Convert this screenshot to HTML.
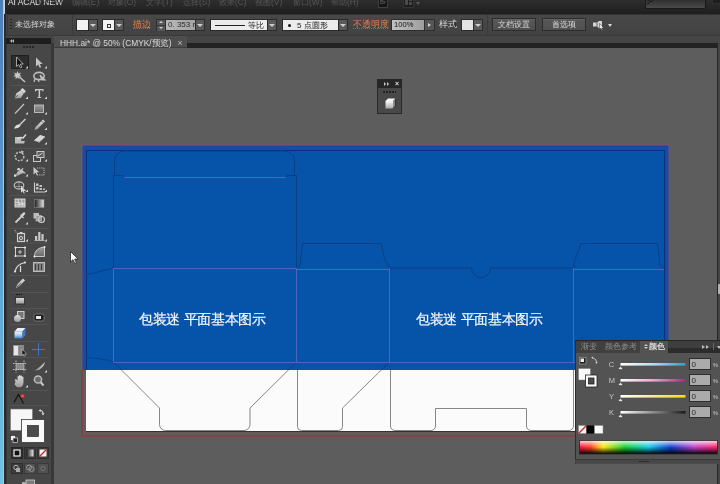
<!DOCTYPE html>
<html><head><meta charset="utf-8">
<style>
*{margin:0;padding:0;box-sizing:border-box}
html,body{width:720px;height:484px;overflow:hidden;background:#444;font-family:"Liberation Sans",sans-serif}
.a{position:absolute}
#menubar{left:0;top:0;width:720px;height:14px;background:linear-gradient(#2e2e2e,#1e1e1e)}
#ctrl{left:6.5px;top:14px;width:714px;height:21px;background:linear-gradient(#484848,#424242);border-top:1px solid #333;border-left:1px solid #3a3a3a}
#strip{left:0;top:35px;width:720px;height:13px;background:#454545;border-top:1px solid #3a3a3a}
#tabbar{left:51px;top:43px;width:669px;height:5.4px;background:#232323}
#tab{left:54px;top:36px;width:133px;height:12.4px;background:#4e4e4e;border-bottom:1px solid #3c3c3c;color:#d8d8d8;font-size:8.8px;line-height:12px;white-space:nowrap}
#canvas{left:53.6px;top:48.4px;width:663.6px;height:436px;background:#5d5d5d;overflow:hidden}
#tools{left:6px;top:38px;width:45px;height:446px;background:#474747;border-left:1px solid #383838}
#toolhead{left:6px;top:38px;width:45px;height:5.5px;background:#1e1e1e}
#leftblue{left:0;top:0;width:2.5px;height:484px;background:linear-gradient(#4f7fb8,#5a9cd0 45%,#70c4e0)}
#leftlight{left:2.5px;top:0;width:1.5px;height:484px;background:linear-gradient(90deg,#a8c0d8,#d0d8e0)}
#leftdark{left:4px;top:14px;width:2px;height:470px;background:#2a2a2a}
.t{position:absolute;white-space:nowrap;line-height:1;will-change:transform}
div{will-change:transform}
.box{position:absolute;background:#e8e8e8;border:1px solid #2a2a2a}
.dd{position:absolute;background:#5a5a5a;border:1px solid #2a2a2a}
.dd:after{content:"";position:absolute;left:50%;top:50%;margin-left:-3px;margin-top:-1px;border-left:3px solid transparent;border-right:3px solid transparent;border-top:3px solid #cfcfcf}
.btn{position:absolute;background:linear-gradient(#585858,#505050);border:1px solid #2c2c2c;box-shadow:inset 0 1px 0 #626262;color:#dcdcdc;font-size:7.7px;text-align:center;line-height:11.5px}
</style></head><body>
<div id="menubar" class="a"></div>
<div class="a" style="left:0;top:0;width:720px;height:14px;overflow:hidden">
<div class="t" style="left:8px;top:-1.8px;font-size:8.4px;color:#e8e8e8">AI ACAD NEW</div>
<div class="t" style="left:36px;top:-1.8px;font-size:8.4px;color:#3c3c3c">文件(F)</div>
<div class="t" style="left:72px;top:-1.8px;font-size:8.4px;color:#575757">编辑(E)</div>
<div class="t" style="left:108px;top:-1.8px;font-size:8.4px;color:#575757">对象(O)</div>
<div class="t" style="left:145.5px;top:-1.8px;font-size:8.4px;color:#575757">文字(T)</div>
<div class="t" style="left:182.5px;top:-1.8px;font-size:8.4px;color:#575757">选择(S)</div>
<div class="t" style="left:219px;top:-1.8px;font-size:8.4px;color:#575757">效果(C)</div>
<div class="t" style="left:255px;top:-1.8px;font-size:8.4px;color:#575757">视图(V)</div>
<div class="t" style="left:293px;top:-1.8px;font-size:8.4px;color:#575757">窗口(W)</div>
<div class="t" style="left:331px;top:-1.8px;font-size:8.4px;color:#575757">帮助(H)</div>
<div class="a" style="left:378px;top:-3px;width:10px;height:11px;border:1px solid #3e3e3e;background:#161616;color:#666;font-size:6px;line-height:9px;text-align:center">Br</div>
<div class="a" style="left:403px;top:-3px;width:11px;height:11px;border:1px solid #333;background:#1e1e1e"></div><div class="a" style="left:404.5px;top:-2px;width:3px;height:7px;background:#4a4a4a"></div><div class="a" style="left:409px;top:-2px;width:3px;height:3px;background:#4a4a4a"></div><div class="a" style="left:409px;top:2px;width:3px;height:3px;background:#4a4a4a"></div>
<div class="a" style="left:416px;top:2px;border-left:2.5px solid transparent;border-right:2.5px solid transparent;border-top:3px solid #5a5a5a"></div>
<div class="a" style="left:645px;top:-4px;width:60.5px;height:12.7px;background:linear-gradient(#262626,#4a4a4a);border:1px solid #1a1a1a;border-radius:2px"></div>
<div class="a" style="left:648px;top:-4px;width:6px;height:6px;border:1.2px solid #1a1a1a;border-radius:50%"></div>
<div class="a" style="left:647px;top:3px;width:3px;height:1.2px;background:#1a1a1a;transform:rotate(-45deg)"></div>
<div class="a" style="left:712px;top:-4px;width:10px;height:8px;border:1px solid #2e2e2e;background:#1e1e1e"></div>
</div>

<div id="ctrl" class="a"></div>
<div id="strip" class="a"></div>
<div class="a" style="left:10px;top:19px;width:2px;height:12px;background:repeating-linear-gradient(#262626 0 1px,transparent 1px 3px)"></div>
<div class="t" style="left:15px;top:20.5px;font-size:8px;color:#dadada">未选择对象</div>
<div class="a" style="left:72px;top:15px;width:1px;height:19px;background:#3a3a3a"></div>
<div class="box" style="left:76px;top:19px;width:13px;height:12px;background:#f2f2f2"></div>
<div class="dd" style="left:88px;top:19px;width:10px;height:12px"></div>
<div class="box" style="left:102px;top:19px;width:13px;height:12px;background:#f2f2f2"><div class="a" style="left:4px;top:3.5px;width:4px;height:3.5px;border:1px solid #333"></div></div>
<div class="dd" style="left:114px;top:19px;width:10px;height:12px"></div>
<div class="t" style="left:133px;top:20px;font-size:8.6px;color:#e8804c;text-decoration:underline dotted;text-decoration-color:#a86040">描边</div>
<div class="a" style="left:155.5px;top:19px;width:10px;height:12px;background:#3a3a3a;border:1px solid #2e2e2e">
 <div class="a" style="left:0;top:0;width:8px;height:5px;background:#575757"></div><div class="a" style="left:0;top:5.5px;width:8px;height:4.5px;background:#575757"></div>
 <div class="a" style="left:2px;top:1px;border-left:2px solid transparent;border-right:2px solid transparent;border-bottom:2.5px solid #d0d0d0"></div>
 <div class="a" style="left:2px;top:6.5px;border-left:2px solid transparent;border-right:2px solid transparent;border-top:2.5px solid #d0d0d0"></div>
</div>
<div class="a" style="left:165px;top:19px;width:31px;height:12px;background:#a9a9a9;border:1px solid #2e2e2e;font-size:8px;color:#2a2a2a;line-height:10.5px;padding-left:2px;white-space:nowrap;overflow:hidden;background:linear-gradient(90deg,#b8b8b8,#a4a4a4)">0. 353 r</div>
<div class="dd" style="left:195px;top:19px;width:10px;height:12px"></div>
<div class="box" style="left:210px;top:19px;width:58px;height:12px;background:#ececec"><div class="a" style="left:4px;top:5px;width:30px;height:1px;background:#222"></div><div class="t" style="left:37px;top:1.5px;font-size:8px;color:#222">等比</div></div>
<div class="dd" style="left:267px;top:19px;width:10px;height:12px"></div>
<div class="box" style="left:282px;top:19px;width:57px;height:12px;background:#ececec"><div class="a" style="left:5px;top:4px;width:3px;height:3px;border-radius:50%;background:#111"></div><div class="t" style="left:13.5px;top:1.5px;font-size:8px;color:#222">5 点圆形</div></div>
<div class="dd" style="left:338px;top:19px;width:10px;height:12px"></div>
<div class="t" style="left:353px;top:20px;font-size:8.6px;color:#e8804c;text-decoration:underline dotted;text-decoration-color:#a86040">不透明度</div>
<div class="a" style="left:391px;top:19px;width:34px;height:12px;background:linear-gradient(90deg,#c2c2c2,#9e9e9e);border:1px solid #2e2e2e;font-size:7.6px;color:#111;line-height:10px;padding-left:2px">100%</div>
<div class="a" style="left:424px;top:19px;width:11px;height:12px;background:#555;border:1px solid #2e2e2e"><div class="a" style="left:3px;top:2.5px;border-top:2.5px solid transparent;border-bottom:2.5px solid transparent;border-left:3.5px solid #d0d0d0"></div></div>
<div class="t" style="left:439px;top:20px;font-size:8.6px;color:#d8d8d8">样式</div>
<div class="a" style="left:455px;top:23px;width:1px;height:4px;background:#2e2e2e"></div>
<div class="box" style="left:461px;top:19px;width:13px;height:12px;background:#e4e4e4"></div>
<div class="dd" style="left:473px;top:19px;width:10px;height:12px"></div>
<div class="a" style="left:487px;top:15px;width:1px;height:19px;background:#3a3a3a"></div>
<div class="btn" style="left:492px;top:18px;width:44px;height:13px">文档设置</div>
<div class="btn" style="left:542px;top:18px;width:44px;height:13px">首选项</div>
<svg class="a" style="left:592px;top:19px" width="14" height="12" viewBox="0 0 14 12"><path d="M1 3.5h4l2-1.5h3v7H7l-2-1.5H1z" fill="#d4d4d4"/><path d="M5 3.5v4" stroke="#444" stroke-width=".8"/><path d="M7.5 4.5v6l1.4-1.3 1 2 .9-.4-1-1.9h1.9z" fill="#eee" stroke="#333" stroke-width=".5"/></svg>
<div class="a" style="left:607.5px;top:24px;border-left:2.5px solid transparent;border-right:2.5px solid transparent;border-top:3.5px solid #d8d8d8"></div>

<div id="tabbar" class="a"></div>
<div id="tools" class="a"></div>
<div id="toolhead" class="a"></div>
<div class="a" style="left:9.5px;top:39px;border-top:2px solid transparent;border-bottom:2px solid transparent;border-right:2.5px solid #bbb"></div><div class="a" style="left:12px;top:39px;border-top:2px solid transparent;border-bottom:2px solid transparent;border-right:2.5px solid #bbb"></div>
<svg class="a" style="left:0;top:0" width="60" height="484" viewBox="0 0 60 484">
<defs>
<linearGradient id="gg" x1="0" y1="0" x2="0" y2="1"><stop offset="0" stop-color="#e0e0e0"/><stop offset="1" stop-color="#9a9a9a"/></linearGradient>
<linearGradient id="gh" x1="0" y1="0" x2="1" y2="0"><stop offset="0" stop-color="#1a1a1a"/><stop offset="1" stop-color="#e8e8e8"/></linearGradient>
<linearGradient id="gr" x1="0" y1="0" x2="0" y2="1"><stop offset="0" stop-color="#9c9c9c"/><stop offset="1" stop-color="#6a6a6a"/></linearGradient>
<linearGradient id="gb" x1="0" y1="0" x2="0" y2="1"><stop offset="0" stop-color="#f0f8ff"/><stop offset=".5" stop-color="#b0d0f0"/><stop offset="1" stop-color="#3a80d0"/></linearGradient>
</defs>
<!-- gripper -->
<path d="M23 47h12" stroke="#262626" stroke-width="2" stroke-dasharray="2 1"/>

<!-- separators -->
<g stroke="#535353" stroke-width="1">
<path d="M10 85.5h38M10 148.5h38M10 195.5h38M10 228.5h38M10 243h38M10 275.5h38M10 292.5h38M10 308.5h38M10 324.5h38M10 341.5h38M10 357.5h38M10 390.5h38M10 405.5h38"/>
</g>
<!-- selection -->
<rect x="11.5" y="55.5" width="17" height="13" fill="#2c2c2c" stroke="#1f1f1f"/>
<path d="M16.5 57v9.5l2.2-2 1.6 3.4 1.5-.6-1.5-3.3h3z" fill="#111" stroke="#b0b0b0" stroke-width=".9"/>
<path d="M36 57.5v9l2.1-2 1.6 3.3 1.5-.6-1.5-3.2h3z" fill="#c4c4c4"/>
<!-- magic wand -->
<path d="M17.5 71l1 2.4 2.5-.8-1.3 2.3 2.2 1.4-2.6.3.1 2.6-1.9-1.8-1.9 1.8.1-2.6-2.6-.3 2.2-1.4-1.3-2.3 2.5.8z" fill="#c8c8c8"/>
<path d="M19.5 77l5.5 5" stroke="#c0c0c0" stroke-width="1.6"/>
<!-- lasso -->
<ellipse cx="39" cy="76" rx="5.2" ry="3.6" fill="none" stroke="#bdbdbd" stroke-width="1.6"/>
<path d="M35 78.5l-1 3.5M38 79l1 3M40 75l5 5h-3z" stroke="#bdbdbd" stroke-width="1.2" fill="#ccc"/>
<!-- pen -->
<path d="M14.5 98.5l1.8-5.2 4.3-2.7 3 3-2.7 4.3z" fill="url(#gg)"/>
<path d="M20.3 90l2.3-2 3.3 3.3-2 2.3z" fill="#d6d6d6"/>
<path d="M14.5 98.5l3.4-3.4" stroke="#555" stroke-width=".8"/>
<!-- type -->
<path d="M35 89h8.5v2.6h-.7l-.6-1.4h-2.1v6.7l1.2.4v.7h-3.9v-.7l1.2-.4v-6.7h-2.1l-.6 1.4H35z" fill="#cacaca"/>
<!-- line -->
<path d="M15 113.5l9-9.5" stroke="#c4c4c4" stroke-width="1.2"/>
<!-- rect -->
<rect x="34.5" y="105" width="9" height="7.5" fill="url(#gr)" stroke="#b8b8b8" stroke-width="1"/>
<!-- paintbrush -->
<path d="M25.5 119l-6 6" stroke="#cfcfcf" stroke-width="1.5"/>
<path d="M19.8 124.5c-2.5-.5-4.8 1.2-5.8 4 2.8.3 5.5-.8 6.6-3.2z" fill="#dedede"/>
<!-- pencil -->
<path d="M43 119.5l2 2-7.5 7.5-3 1 1-3z" fill="url(#gg)"/>
<path d="M41.5 121l2 2" stroke="#666" stroke-width=".8"/>
<!-- blob brush -->
<path d="M15 137h4c1 0 2 1 3 .5l-1 3.5h4l-1 2.5H15z" fill="#bdbdbd"/>
<path d="M17.5 139c1.5-2 4-2 5.5-1l3-3.5" stroke="#d8d8d8" stroke-width="1.4" fill="none"/>
<!-- eraser -->
<path d="M34 140.5l6.2-5.5 5 1.8-6 6z" fill="#a8a8a8"/>
<path d="M34 140.5l6.2-5.5 5 1.8-5.6 4.8z" fill="#d6d6d6"/>
<!-- rotate -->
<circle cx="19.5" cy="156.5" r="4.3" fill="none" stroke="#bcbcbc" stroke-width="1.5" stroke-dasharray="2 1.2"/>
<path d="M21 150.5l3 1.2-2.5 2z" fill="#ccc"/>
<!-- scale -->
<rect x="33.5" y="155.5" width="7" height="6" fill="none" stroke="#c8c8c8"/>
<rect x="37" y="151.5" width="7" height="6" fill="#5a5a5a" stroke="#c8c8c8"/>
<path d="M38 156l4.5-3" stroke="#ddd" stroke-width="1"/>
<!-- warp -->
<path d="M15 175.5l1.5-2c1-1.5 2-3 3.3-3.2-.8-.6-2-.5-2.6.3-.6-1.3.2-2.8 1.6-2.7 1.2.1 1.5 1.3 2 2.3.5-1.2 1.5-2.3 2.7-2.2-.3 1-.9 1.8-1 2.6 1.3.6 2.6 1.6 3.3 3.1-1.3-.3-2.4-.7-3.5-.3-1.8.6-3.2 1.8-5 2.4z" fill="url(#gg)"/>
<rect x="14" y="174.5" width="2.2" height="2.2" fill="#ddd"/>
<!-- free transform -->
<path d="M33.5 167v7.5l2-1.8 1.3 2.6 1.1-.5-1.2-2.5h2.6z" fill="#c8c8c8"/>
<path d="M37 168h7v7h-7" fill="none" stroke="#c8c8c8" stroke-width=".9" stroke-dasharray="1.2 1"/>
<!-- shape builder -->
<ellipse cx="19" cy="185.5" rx="4.8" ry="3.6" fill="none" stroke="#c4c4c4" stroke-width="1.1"/>
<path d="M14.5 186.5h9M19 182v7" stroke="#aaa" stroke-width=".7"/>
<path d="M21 186v6.8l1.6-1.5 1.2 2.3 1-.4-1.1-2.2h2.4z" fill="#d8d8d8"/>
<!-- perspective grid -->
<path d="M34.5 182.5v9.5h11" fill="none" stroke="#cfcfcf" stroke-width="1.1"/>
<path d="M36 183.5h2.5v2.5H36zM36 187h2.5v2.5H36zM39.5 185h2.5v2H39.5zM39.5 188h2.5v2H39.5zM43 188.5h2v1.5h-2z" fill="#c0c0c0"/>
<!-- mesh -->
<rect x="15" y="199" width="10" height="8" fill="#9a9a9a" stroke="#d8d8d8"/>
<path d="M15 202c3 0 4 2 10 1M15 205c3 0 5-1 10 0M18 199c0 3 2 5 1 8M22 199c-1 3 1 5 0 8" fill="none" stroke="#e8e8e8" stroke-width=".8"/>
<!-- gradient -->
<rect x="34.5" y="199.5" width="9.5" height="8" fill="url(#gh)" stroke="#888" stroke-width=".6"/>
<!-- eyedropper -->
<path d="M15.5 222.5l6.5-6.5" stroke="#cdcdcd" stroke-width="1.8"/>
<path d="M21 214.5l2.5-2c1-.8 2.3.5 1.5 1.5l-2 2.5z" fill="#dadada"/>
<path d="M20.5 215l3 3" stroke="#cfcfcf" stroke-width="1.2"/>
<!-- blend -->
<rect x="33.5" y="213" width="5.5" height="5.5" fill="#bbb"/>
<rect x="36" y="215.5" width="5.5" height="5.5" fill="#999" stroke="#ccc" stroke-width=".6"/>
<circle cx="41.5" cy="219.5" r="3" fill="none" stroke="#d0d0d0" stroke-width="1.1"/>
<!-- symbol sprayer -->
<rect x="17.5" y="233.5" width="7" height="8" fill="#5a5a5a" stroke="#d0d0d0" stroke-width="1.1"/>
<path d="M19.5 232h3v1.5h-3z" fill="#d0d0d0"/>
<circle cx="21" cy="238" r="1.6" fill="none" stroke="#dcdcdc" stroke-width=".9"/>
<path d="M14.5 230.5h1M15.5 232h1" stroke="#bbb"/>
<!-- column graph -->
<path d="M34.5 240.5h10" stroke="#b0b0b0"/>
<path d="M35 236h2.2v4H35zM38.2 232h2.2v8h-2.2zM41.4 234h2.2v6h-2.2z" fill="#c8c8c8"/>
<!-- artboard -->
<rect x="15.5" y="247.5" width="9.5" height="8.5" fill="none" stroke="#cfcfcf" stroke-width="1"/>
<circle cx="15.5" cy="247.5" r="1" fill="#eee"/><circle cx="25" cy="247.5" r="1" fill="#eee"/><circle cx="15.5" cy="256" r="1" fill="#eee"/><circle cx="25" cy="256" r="1" fill="#eee"/>
<path d="M20 250v4M18 252h4" stroke="#ddd" stroke-width=".8"/>
<!-- slice/arc -->
<path d="M34.5 256.5c0-6 4-9 10-9.5v9.5z" fill="url(#gr)" stroke="#c8c8c8" stroke-width="1"/>
<circle cx="34.5" cy="256.5" r="1" fill="#eee"/><circle cx="44.5" cy="247" r="1" fill="#eee"/>
<!-- width/arc tool -->
<path d="M15 271.5c1-5 5-8 10-9" fill="none" stroke="#d6d6d6" stroke-width="1.2"/>
<path d="M20.5 266v6" stroke="#ddd" stroke-width="1.2"/>
<circle cx="15" cy="271.5" r="1" fill="#eee"/><circle cx="25" cy="262.5" r="1" fill="#eee"/>
<!-- perspective bars -->
<rect x="33.5" y="262.5" width="11" height="9" fill="#8a8a8a" stroke="#bdbdbd"/>
<path d="M35.5 264v6M38.5 264v6M41.5 264v6" stroke="#3a3a3a" stroke-width="1.2"/>
<!-- knife/pen variant -->
<path d="M15.5 288.5l2-4.5 5.5-5.5 2 2-5.5 5.5z" fill="url(#gg)"/>
<path d="M17 287l4-4" stroke="#555" stroke-width=".7"/>
<!-- dashed rect icon -->
<path d="M16 294.5h6" stroke="#111" stroke-width="1" stroke-dasharray="1.5 1"/>
<rect x="15.5" y="297.5" width="9" height="6.5" fill="url(#gg)" stroke="#2a2a2a" stroke-width=".8"/>
<!-- sphere + rect -->
<rect x="17.5" y="311.5" width="6.5" height="7" fill="#777" stroke="#d0d0d0" stroke-width="1"/>
<circle cx="17.5" cy="318.5" r="3.5" fill="url(#gg)"/>
<!-- rounded rect -->
<rect x="34" y="314" width="10" height="7" rx="2" fill="#1e1e1e" stroke="#888" stroke-width=".7"/>
<rect x="36" y="316" width="5" height="3" fill="#e8e8e8"/>
<!-- blue cube -->
<path d="M14.5 331.5l3-3.5h8l-3 3.5z" fill="#e8f0f8"/>
<path d="M14.5 331.5h8v7h-8z" fill="url(#gb)"/>
<path d="M22.5 331.5l3-3.5v7l-3 3.5z" fill="#3c7ac8"/>
<!-- two panels + cursor -->
<rect x="13.5" y="345.5" width="5" height="10" fill="#e6e6e6" stroke="#999" stroke-width=".7"/>
<rect x="18.5" y="345.5" width="5" height="10" fill="#888" stroke="#999" stroke-width=".7"/>
<path d="M22 349v6.5l1.5-1.3 1 2 1-.4-1-1.9h2z" fill="#111" stroke="#ddd" stroke-width=".5"/>
<!-- blue cross -->
<path d="M32 349.5h13M38.5 343v12.5" stroke="#3a78d0" stroke-width="1"/>
<!-- crop -->
<rect x="16" y="363" width="8" height="7" fill="#8a8a8a"/>
<path d="M13 363.5h14M13 369.5h14M16 360.5v12M24 360.5v12" stroke="#c8c8c8" stroke-width=".9" stroke-dasharray="1.5 .8"/>
<!-- knife -->
<path d="M34 370.5c3-1 7-4 11-8.5-1 4-3 6-6 8z" fill="url(#gg)"/>
<!-- hand -->
<path d="M15.5 381.5c-1.5-1.5-.5-3 1-2l1 1v-3.8c0-1 1.5-1 1.5 0v3-4c0-1 1.5-1 1.5 0v4-3.5c0-1 1.5-1 1.5 0v3.5-2.5c0-1 1.5-1 1.5 0v5c0 3-1.5 5-4 5h-1.5c-1.5 0-2.5-1.5-3.5-3z" fill="url(#gg)"/>
<!-- zoom -->
<circle cx="38" cy="379.5" r="3.6" fill="#6a6a6a" stroke="#bdbdbd" stroke-width="1.5"/>
<path d="M40.5 382l3 3.5" stroke="#c8c8c8" stroke-width="2"/>
<!-- puppet -->
<path d="M14 402.5l4.5-8 5 9" fill="none" stroke="#111" stroke-width="1.1"/>
<circle cx="22.5" cy="396" r="2.2" fill="#cc2a2a"/>
<path d="M21.5 396h2" stroke="#fff" stroke-width=".6"/>
<!-- small triangles -->
<g fill="#dcdcdc">
<path d="M25.5 68.5h2.5v-2.5z"/><path d="M44.5 68.5h2.5v-2.5z"/>
<path d="M25.5 99h2.5v-2.5z"/><path d="M44.5 99h2.5v-2.5z"/>
<path d="M25.5 114.5h2.5v-2.5z"/><path d="M44.5 114.5h2.5v-2.5z"/>
<path d="M44.5 130h2.5v-2.5z"/><path d="M44.5 144.5h2.5v-2.5z"/>
<path d="M25.5 161.5h2.5v-2.5z"/><path d="M44.5 161.5h2.5v-2.5z"/>
<path d="M25.5 176.5h2.5v-2.5z"/>
<path d="M25.5 192h2.5v-2.5z"/><path d="M44.5 192h2.5v-2.5z"/>
<path d="M25.5 224.5h2.5v-2.5z"/>
<path d="M25.5 241.5h2.5v-2.5z"/><path d="M44.5 241.5h2.5v-2.5z"/>
<path d="M44.5 372.5h2.5v-2.5z"/><path d="M25.5 387.5h2.5v-2.5z"/>
</g>
<!-- fill / stroke -->
<rect x="10.5" y="409" width="22" height="21.5" fill="#f6f6f6" stroke="#777" stroke-width=".6"/>
<rect x="21.5" y="419.5" width="23" height="23" fill="#fafafa" stroke="#3a3a3a" stroke-width=".8"/>
<rect x="27.5" y="425.5" width="11" height="11" fill="#4c4c4c" stroke="#2a2a2a" stroke-width=".7"/>
<path d="M40 410.5c2 0 3 1 3 3" fill="none" stroke="#d4d4d4" stroke-width="1.1"/>
<path d="M38.5 410.5l2.2-1.6v3.2zM43 415.5l-1.6-2.2h3.2z" fill="#d4d4d4"/>
<rect x="10.5" y="435.5" width="5" height="5" fill="#f0f0f0" stroke="#222" stroke-width=".6"/>
<rect x="13" y="438" width="4.5" height="4.5" fill="#222" stroke="#ddd" stroke-width=".7"/>
<!-- color mode buttons -->
<rect x="11.5" y="447.5" width="11" height="11" fill="#2e2e2e" stroke="#262626"/>
<rect x="14" y="450" width="6" height="6" fill="#111" stroke="#f0f0f0" stroke-width="1.2"/>
<rect x="24.5" y="447.5" width="11" height="11" fill="#3a3a3a" stroke="#2e2e2e"/>
<rect x="26.5" y="449.5" width="7" height="7" fill="url(#gh)"/>
<rect x="37.5" y="447.5" width="11" height="11" fill="#3a3a3a" stroke="#2e2e2e"/>
<rect x="39.5" y="449.5" width="7" height="7" fill="#f2f2f2"/>
<path d="M39.5 456.5l7-7" stroke="#d02020" stroke-width="1.3"/>
<!-- draw mode buttons -->
<rect x="11.5" y="463.5" width="11" height="10" fill="#3c3c3c" stroke="#2e2e2e"/>
<rect x="24.5" y="463.5" width="11" height="10" fill="#505050" stroke="#3a3a3a"/>
<rect x="37.5" y="463.5" width="11" height="10" fill="#505050" stroke="#3a3a3a"/>
<circle cx="16" cy="467.5" r="2.2" fill="none" stroke="#bbb" stroke-width=".9"/><rect x="16" y="468" width="4" height="4" fill="#aaa"/>
<circle cx="29" cy="467.5" r="2.5" fill="none" stroke="#999" stroke-width=".9"/><circle cx="31.5" cy="469" r="2.5" fill="none" stroke="#999" stroke-width=".9"/>
<circle cx="43" cy="468.5" r="2.2" fill="none" stroke="#777" stroke-width=".9"/>
<!-- screen mode -->
<rect x="26" y="480" width="8.5" height="5" fill="#7a7a7a" stroke="#d0d0d0" stroke-width=".8"/>
<rect x="22" y="482" width="4" height="3" fill="#aaa"/>
</svg>
<div id="canvas" class="a"></div>
<svg class="a" style="left:0;top:0" width="720" height="484" viewBox="0 0 720 484">
<defs><clipPath id="cb"><rect x="82" y="146" width="587" height="224"/></clipPath>
<clipPath id="cw"><rect x="82" y="370" width="587" height="70"/></clipPath></defs>
<path d="M82 370V145H669V370" fill="none" stroke="#80506a" stroke-width="1.4"/>
<path d="M83 370V435H668V370" fill="#665a5a" stroke="none"/>
<path d="M82 370V436H669V370" fill="none" stroke="#7a4646" stroke-width="1.9"/>
<rect x="82.5" y="145.5" width="586" height="224.5" fill="#164ca8"/>
<rect x="86" y="150" width="579" height="220" fill="#0554aa"/>
<rect x="86" y="370" width="579" height="61" fill="#fbfbfb"/>
<path d="M86.5 150.5H664.5V370" fill="none" stroke="#0b2f78" stroke-width="1"/>
<path d="M86.5 150.5V370" fill="none" stroke="#0b2f78" stroke-width="1"/>
<path d="M86 431.5H665" stroke="#333" stroke-width="1"/>
<g clip-path="url(#cb)" fill="none" stroke-width="1">
 <g stroke="#0b3f84">
  <path d="M113.5 268V175.5H114.5V161A10 10 0 0 1 124.5 151H284.5A10 10 0 0 1 294.5 161V175.5H296.5V268"/>
  <path d="M113.5 175.5H123L124 177.5M296.5 175.5H287L286 177.5"/>
  <path d="M86 275L113.5 268"/>
  <path d="M86 357.5Q104 358.5 113.5 362"/>
  <path d="M296.5 268L300 265L302.5 243.5H381.5L384 257L389.5 268"/>
  <path d="M389.5 268H471.5A9.5 9.5 0 0 0 490.5 268H573.5"/>
  <path d="M573.5 268.5L574.7 260.5L581 243.5H657.5L660 265L664.5 268.5"/>
  <path d="M113.5 362L159.5 408M296.5 362L250 408M389.5 362L342.5 408"/>
 </g>
 <g stroke="#4a66c0">
  <path d="M124 177.5H286"/>
  <path d="M113.5 268.5H296.5M296.5 269.5H389.5M573.5 269.5H664"/>
  <path d="M113.5 268V362M296.5 268V362M389.5 268V362M573.5 268V362"/>
  <path d="M113.5 362.5H664"/>
 </g>
</g>
<g clip-path="url(#cw)" fill="none" stroke="#6a6a6a" stroke-width="0.8">
  <path d="M113.5 362L159.5 408V424.5A6 6 0 0 0 165.5 430.5H244A6 6 0 0 0 250 424.5V408L296.5 362"/>
  <path d="M297.5 362V426.5A4 4 0 0 0 301.5 430.5H338.5A4 4 0 0 0 342.5 426.5V408L389.5 362"/>
  <path d="M390.5 362V426A4.5 4.5 0 0 0 395 430.5H431A4.5 4.5 0 0 0 435.5 426V408.5H526.5V426A4.5 4.5 0 0 0 531 430.5H569A4.5 4.5 0 0 0 573.5 426V362"/>
</g>


</svg>
<svg class="a" style="left:69px;top:250px" width="12" height="16" viewBox="0 0 12 16">
<path d="M1.5 1.5v10.5l2.5-2.3 1.8 3.8 1.6-.7-1.7-3.7h3.5z" fill="#fafafa" stroke="#222" stroke-width=".8" stroke-linejoin="round"/>
</svg>
<div class="t" id="tx1" style="left:139px;top:313px;font-size:13.5px;color:#f8f8f8;-webkit-text-stroke:0.2px #f8f8f8;letter-spacing:-0.3px">包装迷 平面基本图示</div>
<div class="t" id="tx2" style="left:415.5px;top:313px;font-size:13.5px;color:#f8f8f8;-webkit-text-stroke:0.2px #f8f8f8;letter-spacing:-0.3px">包装迷 平面基本图示</div>
<div id="tab" class="a"><span style="position:absolute;left:6px;top:1px;transform:scaleX(0.95);transform-origin:0 0">HHH.ai* @ 50% (CMYK/预览)</span><span style="position:absolute;left:123.5px;top:0.5px;color:#bbb">×</span></div>

<div class="a" style="left:51px;top:43px;width:2.6px;height:441px;background:#383838"></div>
<div class="a" style="left:717.2px;top:43px;width:1px;height:441px;background:#242424"></div>
<div class="a" style="left:718.2px;top:43px;width:2px;height:441px;background:#454545"></div>
<div class="a" style="left:718.3px;top:284px;width:2px;height:9.5px;background:#b4b4b4;border-radius:1px 0 0 1px"></div>
<!-- floating panel -->
<div class="a" style="left:377px;top:79px;width:25px;height:34.5px;background:#484848;border:1px solid #2a2a2a"></div>
<div class="a" style="left:377px;top:79px;width:25px;height:8.5px;background:#262626"></div>
<div class="a" style="left:384px;top:81.5px;border-top:2px solid transparent;border-bottom:2px solid transparent;border-left:2.5px solid #ccc"></div>
<div class="a" style="left:386.5px;top:81.5px;border-top:2px solid transparent;border-bottom:2px solid transparent;border-left:2.5px solid #ccc"></div>
<div class="t" style="left:395px;top:79.6px;font-size:7px;color:#ddd;font-weight:bold">×</div>
<div class="a" style="left:383px;top:90.5px;width:13px;height:1.5px;background:repeating-linear-gradient(90deg,#222 0 2px,transparent 2px 3px)"></div>
<svg class="a" style="left:383px;top:96px" width="15" height="14" viewBox="0 0 15 14">
<defs><linearGradient id="cu" x1="0" y1="0" x2="0" y2="1"><stop offset="0" stop-color="#fafafa"/><stop offset="1" stop-color="#a8a8a8"/></linearGradient></defs>
<path d="M2.5 5l2.5-2.5h7.5L10 5z" fill="#f4f4f4"/>
<path d="M2.5 5H10v7.5H2.5z" fill="url(#cu)"/>
<path d="M10 5l2.5-2.5v7.5L10 12.5z" fill="#8a8a8a"/>
<path d="M12.5 2.5v7.5L10 12.5" fill="none" stroke="#222" stroke-width=".8"/>
</svg>

<!-- color panel -->
<div class="a" style="left:574.5px;top:339.5px;width:146px;height:124px;background:#535353;border-top:1px solid #262626;border-left:1px solid #2c2c2c"></div>
<div class="a" style="left:575.5px;top:340.5px;width:145px;height:12px;background:#2c2c2c"></div>
<div class="a" style="left:668px;top:340.5px;width:52px;height:6.5px;background:#3e3e3e"></div>
<div class="a" style="left:575.5px;top:340.5px;width:23.5px;height:12px;background:#404040;color:#8e8e8e;font-size:7.6px;line-height:12px;padding-left:5px;white-space:nowrap">渐变</div>
<div class="a" style="left:600px;top:340.5px;width:40px;height:12px;background:#404040;color:#8e8e8e;font-size:7.6px;line-height:12px;padding-left:4.5px;white-space:nowrap">颜色参考</div>
<div class="a" style="left:640px;top:340.5px;width:28px;height:12px;background:#535353;color:#ececec;font-size:7.6px;line-height:12px;padding-left:9px;white-space:nowrap;-webkit-text-stroke:0.15px #ececec">颜色</div>
<div class="a" style="left:643.5px;top:343.5px;border-left:2px solid transparent;border-right:2px solid transparent;border-bottom:2.5px solid #c8c8c8"></div><div class="a" style="left:643.5px;top:347px;border-left:2px solid transparent;border-right:2px solid transparent;border-top:2.5px solid #c8c8c8"></div>
<div class="a" style="left:702px;top:344.5px;border-top:2px solid transparent;border-bottom:2px solid transparent;border-left:3px solid #bcbcbc"></div>
<div class="a" style="left:705.5px;top:344.5px;border-top:2px solid transparent;border-bottom:2px solid transparent;border-left:3px solid #bcbcbc"></div>
<div class="a" style="left:712.5px;top:343px;width:1px;height:7px;background:#666"></div>
<div class="a" style="left:716.5px;top:346px;border-left:2.5px solid transparent;border-right:2.5px solid transparent;border-top:3px solid #bbb"></div>
<svg class="a" style="left:574px;top:352px" width="146" height="112" viewBox="574 352 146 112">
<defs>
<linearGradient id="sc" x1="0" x2="1"><stop offset="0" stop-color="#fff"/><stop offset=".5" stop-color="#b8dcf0"/><stop offset="1" stop-color="#20a0d8"/></linearGradient>
<linearGradient id="sm" x1="0" x2="1"><stop offset="0" stop-color="#fff"/><stop offset=".5" stop-color="#e8a8d0"/><stop offset="1" stop-color="#b8207a"/></linearGradient>
<linearGradient id="sy" x1="0" x2="1"><stop offset="0" stop-color="#fff"/><stop offset=".4" stop-color="#f8f0a0"/><stop offset="1" stop-color="#f0e010"/></linearGradient>
<linearGradient id="sk" x1="0" x2="1"><stop offset="0" stop-color="#fff"/><stop offset=".5" stop-color="#909090"/><stop offset="1" stop-color="#1a1a1a"/></linearGradient>
<linearGradient id="spec" x1="0" x2="1">
<stop offset="0" stop-color="#ff1040"/><stop offset=".08" stop-color="#ff4020"/><stop offset=".17" stop-color="#ffe810"/><stop offset=".33" stop-color="#10d030"/><stop offset=".5" stop-color="#10c8e8"/><stop offset=".66" stop-color="#1040d0"/><stop offset=".83" stop-color="#c040c8"/><stop offset="1" stop-color="#ff2060"/></linearGradient>
<linearGradient id="specv" x1="0" y1="0" x2="0" y2="1"><stop offset="0" stop-color="#fff" stop-opacity=".85"/><stop offset=".5" stop-color="#fff" stop-opacity="0"/><stop offset=".5" stop-color="#000" stop-opacity="0"/><stop offset="1" stop-color="#000" stop-opacity="1"/></linearGradient>
</defs>
<!-- small fill/stroke icon + swap -->
<rect x="579.5" y="357.5" width="6.5" height="6.5" fill="#222" stroke="#aaa" stroke-width=".6"/>
<rect x="580.5" y="358.5" width="3.5" height="3.5" fill="#eee"/>
<path d="M592 358c2 0 4 1 4.5 4" fill="none" stroke="#c8c8c8" stroke-width="1"/>
<path d="M591 357.5l2-1v2zM596.5 364l-1.2-2h2.4z" fill="#c8c8c8"/>
<!-- big fill/stroke -->
<rect x="578.5" y="368.5" width="12" height="11.5" fill="#f8f8f8" stroke="#777" stroke-width=".5"/>
<rect x="585.5" y="375" width="11.5" height="12" fill="#fafafa" stroke="#222" stroke-width=".8"/>
<rect x="588.5" y="378" width="5.5" height="6" fill="#4a4a4a" stroke="#222" stroke-width=".8"/>
<!-- labels -->
<g fill="#c8c8c8" font-size="7.5" font-family="Liberation Sans, sans-serif">
<text x="608.8" y="367">C</text><text x="608.8" y="383">M</text><text x="609" y="399">Y</text><text x="609" y="415">K</text>
<text x="712.8" y="366.5" font-size="6" transform-origin="712.8 0">%</text><text x="712.8" y="382.5" font-size="6" transform-origin="712.8 0">%</text><text x="712.8" y="398.5" font-size="6" transform-origin="712.8 0">%</text><text x="712.8" y="414.5" font-size="6" transform-origin="712.8 0">%</text>
</g>
<!-- sliders -->
<rect x="620.5" y="363" width="65" height="2.6" fill="url(#sc)"/>
<rect x="620.5" y="379" width="65" height="2.6" fill="url(#sm)"/>
<rect x="620.5" y="395" width="65" height="2.6" fill="url(#sy)"/>
<rect x="620.5" y="411" width="65" height="2.6" fill="url(#sk)"/>
<g fill="#e4e4e4" stroke="#2a2a2a" stroke-width=".5">
<path d="M620.5 366l2.8 3.6h-5.6z"/><path d="M620.5 382l2.8 3.6h-5.6z"/><path d="M620.5 398l2.8 3.6h-5.6z"/><path d="M620.5 414l2.8 3.6h-5.6z"/>
</g>
<!-- value boxes -->
<g fill="#ababab" stroke="#2e2e2e" stroke-width="1">
<rect x="689.5" y="358.5" width="21" height="11"/><rect x="689.5" y="374.5" width="21" height="11"/><rect x="689.5" y="390.5" width="21" height="11"/><rect x="689.5" y="406.5" width="21" height="11"/>
</g>
<g fill="#2a2a2a" font-size="8" font-family="Liberation Sans, sans-serif">
<text x="691.5" y="366.5">0</text><text x="691.5" y="382.5">0</text><text x="691.5" y="398.5">0</text><text x="691.5" y="414.5">0</text>
</g>
<!-- none/black/white -->
<rect x="578.5" y="425.5" width="8" height="8" fill="#f4f4f4" stroke="#888" stroke-width=".5"/>
<path d="M578.5 433.5l8-8" stroke="#d02020" stroke-width="1.2"/>
<rect x="586.5" y="425.5" width="8" height="8" fill="#050505"/>
<rect x="594.5" y="425.5" width="8.5" height="8" fill="#fafafa" stroke="#888" stroke-width=".5"/>
<!-- spectrum -->
<rect x="579.5" y="440.5" width="138" height="13.5" fill="url(#spec)"/>
<rect x="579.5" y="440.5" width="138" height="13.5" fill="url(#specv)"/>
<rect x="579.5" y="440.5" width="138" height="13.5" fill="none" stroke="#2a2a2a" stroke-width=".8"/>
<!-- bottom bar -->
<rect x="575" y="459.5" width="146" height="4" fill="#474747"/>
<path d="M575 459.5h146" stroke="#3a3a3a" stroke-width="1"/>
<path d="M639 461.5h10" stroke="#222" stroke-width="1.2" stroke-dasharray="1.5 .8"/>
</svg>
<div id="leftblue" class="a"></div>
<div id="leftlight" class="a"></div>
<div id="leftdark" class="a"></div>
</body></html>
